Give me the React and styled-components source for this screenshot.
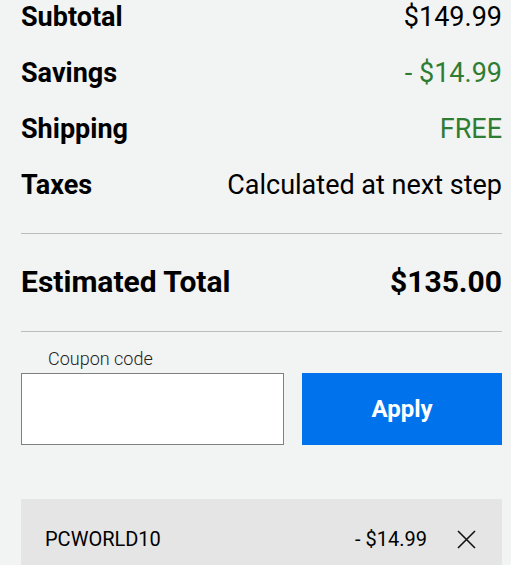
import React from 'react';
import styled, { createGlobalStyle } from 'styled-components';

const GlobalStyle = createGlobalStyle`
  body {
    margin: 0;
    background-color: #f2f3f3;
    font-family: Roboto, 'Liberation Sans', sans-serif;
    color: #000;
  }
`;

const summary = [
  { label: 'Subtotal', value: '$149.99' },
  { label: 'Savings', value: '- $14.99', green: true },
  { label: 'Shipping', value: 'FREE', green: true },
  { label: 'Taxes', value: 'Calculated at next step' },
];

export default function App() {
  return (
    <>
      <GlobalStyle />
      <Summary>
        <List>
          {summary.map((row) => (
            <Row key={row.label}>
              <Label>{row.label}</Label>
              <Value green={row.green}>{row.value}</Value>
            </Row>
          ))}
        </List>
        <Divider />
        <TotalRow>
          <TotalText>Estimated Total</TotalText>
          <TotalText>$135.00</TotalText>
        </TotalRow>
        <Divider />
        <CouponForm onSubmit={(e) => e.preventDefault()}>
          <Field>
            <FieldLabel htmlFor='coupon'>Coupon code</FieldLabel>
            <CouponInput id='coupon' type='text' />
          </Field>
          <ApplyButton type='submit'>Apply</ApplyButton>
        </CouponForm>
        <AppliedCoupon>
          <CouponName>PCWORLD10</CouponName>
          <CouponRight>
            <CouponAmount>- $14.99</CouponAmount>
            <RemoveButton type='button' aria-label='Remove coupon'>
              <svg width='19' height='19' viewBox='0 0 19 19'>
                <path d='M1 1L18 18M18 1L1 18' stroke='#111' strokeWidth='1.6' fill='none' />
              </svg>
            </RemoveButton>
          </CouponRight>
        </AppliedCoupon>
      </Summary>
    </>
  );
}

const Summary = styled.section`
  padding: 0 9px 0 21px;
`;

const List = styled.div`
  display: flex;
  flex-direction: column;
  gap: 24px;
  padding: 1px 0 32px;
`;

const Row = styled.div`
  display: flex;
  justify-content: space-between;
  align-items: center;
  height: 32px;
  font-size: 27px;
`;

const Label = styled.span`
  font-weight: 700;
`;

const Value = styled.span`
  font-weight: 400;
  color: ${({ green }) => (green ? '#2e7d32' : '#000')};
`;

const Divider = styled.hr`
  margin: 0;
  border: none;
  border-top: 1px solid #bdbdbd;
`;

const TotalRow = styled.div`
  display: flex;
  justify-content: space-between;
  align-items: center;
  height: 40px;
  padding: 27px 0 30px;
`;

const TotalText = styled.span`
  font-size: 30px;
  font-weight: 700;
`;

const CouponForm = styled.form`
  display: flex;
  align-items: flex-end;
  gap: 18px;
  padding-top: 17px;
`;

const Field = styled.div`
  display: flex;
  flex-direction: column;
  gap: 4px;
  width: 263px;
`;

const FieldLabel = styled.label`
  padding-left: 27px;
  font-size: 18px;
  font-weight: 300;
  line-height: 20px;
  color: #222;
`;

const CouponInput = styled.input`
  box-sizing: border-box;
  height: 72px;
  width: 100%;
  margin: 0;
  border: 1px solid #808080;
  background: #fff;
  font-family: inherit;
  font-size: 18px;
  padding: 0 12px;
`;

const ApplyButton = styled.button`
  flex: 1;
  height: 72px;
  border: none;
  background-color: #0073ec;
  color: #fff;
  font-family: inherit;
  font-size: 24px;
  font-weight: 700;
  cursor: pointer;
`;

const AppliedCoupon = styled.div`
  display: flex;
  justify-content: space-between;
  align-items: center;
  margin-top: 54px;
  height: 80px;
  padding: 0 26px 0 24px;
  background-color: #e5e5e5;
  box-sizing: border-box;
`;

const CouponName = styled.span`
  font-size: 20px;
`;

const CouponRight = styled.div`
  display: flex;
  align-items: center;
  gap: 30px;
`;

const CouponAmount = styled.span`
  font-size: 20px;
`;

const RemoveButton = styled.button`
  display: flex;
  padding: 0;
  border: none;
  background: transparent;
  cursor: pointer;
`;
